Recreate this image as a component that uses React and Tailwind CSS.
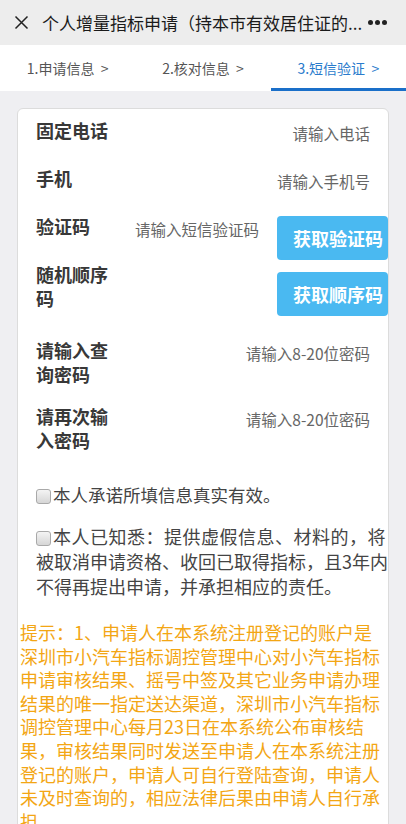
import React from 'react';

const font = { fontFamily: '"Noto Sans CJK SC", "Noto Sans", sans-serif' };

const Checkbox = () => (
    <span className="inline-block align-[-2px] w-[15px] h-[15px] mr-[2px] rounded-[3px] border border-[#a9a9a9] bg-gradient-to-b from-[#f4f4f4] to-[#d6d6d6]"></span>
);

const FieldRow = ({ label, placeholder, height }) => (
    <div className={`flex items-start pl-[18px] pr-[18px] ${height}`}>
        <div className="w-[74px] text-[18px] leading-[24px] font-bold text-[#383838]">{label}</div>
        <div className="flex-1 text-right text-[15.5px] leading-[24px] text-[#666] mt-[3px]">{placeholder}</div>
    </div>
);

const tips = [
    '提示：1、申请人在本系统注册登记的账户是',
    '深圳市小汽车指标调控管理中心对小汽车指标',
    '申请审核结果、摇号中签及其它业务申请办理',
    '结果的唯一指定送达渠道，深圳市小汽车指标',
    '调控管理中心每月23日在本系统公布审核结',
    '果，审核结果同时发送至申请人在本系统注册',
    '登记的账户，申请人可自行登陆查询，申请人',
    '未及时查询的，相应法律后果由申请人自行承',
    '担。',
];

const App = () => {
    return (
        <div className="w-[406px] h-[824px] overflow-hidden bg-[#efeff2]" style={font}>
            {/* top bar */}
            <div className="h-[45px] bg-[#ededed] flex items-center pl-[14px] pr-[19px]">
                <svg width="15" height="15" viewBox="0 0 15 15" className="shrink-0">
                    <path d="M1.5 1.5 L13.5 13.5 M13.5 1.5 L1.5 13.5" stroke="#222" strokeWidth="1.5" fill="none" />
                </svg>
                <div className="ml-[13px] flex-1 text-[17px] text-[#1a1a1a] whitespace-nowrap overflow-hidden">
                    个人增量指标申请（持本市有效居住证的...
                </div>
                <div className="flex gap-[2px] ml-[4px]">
                    <span className="w-[5px] h-[5px] rounded-full bg-[#222]"></span>
                    <span className="w-[5px] h-[5px] rounded-full bg-[#222]"></span>
                    <span className="w-[5px] h-[5px] rounded-full bg-[#222]"></span>
                </div>
            </div>

            {/* steps */}
            <div className="h-[46px] bg-white grid grid-cols-3 text-[14px]">
                <div className="flex items-center justify-center text-[#555]">1.申请信息&nbsp;&nbsp;&gt;</div>
                <div className="flex items-center justify-center text-[#555]">2.核对信息&nbsp;&nbsp;&gt;</div>
                <div className="flex items-center justify-center text-[#2a7bcc] border-b-[3px] border-[#1a6fc9] pt-[3px]">3.短信验证&nbsp;&nbsp;&gt;</div>
            </div>

            {/* form card */}
            <div className="mt-[17px] ml-[17px] w-[372px] bg-white border border-[#dcdcdc] rounded-[6px] pt-[9px]">
                <FieldRow label="固定电话" placeholder="请输入电话" height="h-[48px]" />
                <FieldRow label="手机" placeholder="请输入手机号" height="h-[48px]" />

                <div className="flex items-start pl-[18px] h-[48px]">
                    <div className="w-[74px] text-[18px] leading-[24px] font-bold text-[#383838]">验证码</div>
                    <div className="flex-1 text-[15.5px] leading-[24px] text-[#666] mt-[3px] pl-[25px]">请输入短信验证码</div>
                    <button className="mt-[2px] w-[111px] h-[44px] rounded-[4px] bg-[#4ab9f1] text-white text-[18px] font-bold pl-[16px] text-left">获取验证码</button>
                </div>

                <div className="flex items-start pl-[18px] h-[76px]">
                    <div className="w-[74px] text-[18px] leading-[24px] font-bold text-[#383838]">随机顺序码</div>
                    <div className="flex-1"></div>
                    <button className="mt-[10px] w-[111px] h-[44px] rounded-[4px] bg-[#4ab9f1] text-white text-[18px] font-bold pl-[16px] text-left">获取顺序码</button>
                </div>

                <FieldRow label="请输入查询密码" placeholder="请输入8-20位密码" height="h-[66px]" />
                <FieldRow label="请再次输入密码" placeholder="请输入8-20位密码" height="h-[78px]" />

                <div className="pl-[18px] text-[17.5px] leading-[26px] text-[#444] whitespace-nowrap">
                    <Checkbox />本人承诺所填信息真实有效。
                </div>
                <div className="mt-[16px] pl-[18px] text-[18px] leading-[25px] text-[#444] whitespace-nowrap">
                    <div className="tracking-[0.5px]"><Checkbox />本人已知悉：提供虚假信息、材料的，将</div>
                    <div>被取消申请资格、收回已取得指标，且3年内</div>
                    <div>不得再提出申请，并承担相应的责任。</div>
                </div>

                <div className="mt-[22px] pl-[2px] text-[18px] leading-[23.6px] text-[#f3a614] whitespace-nowrap">
                    {tips.map((line) => (
                        <div key={line}>{line}</div>
                    ))}
                </div>
            </div>
        </div>
    );
};

export default App;
